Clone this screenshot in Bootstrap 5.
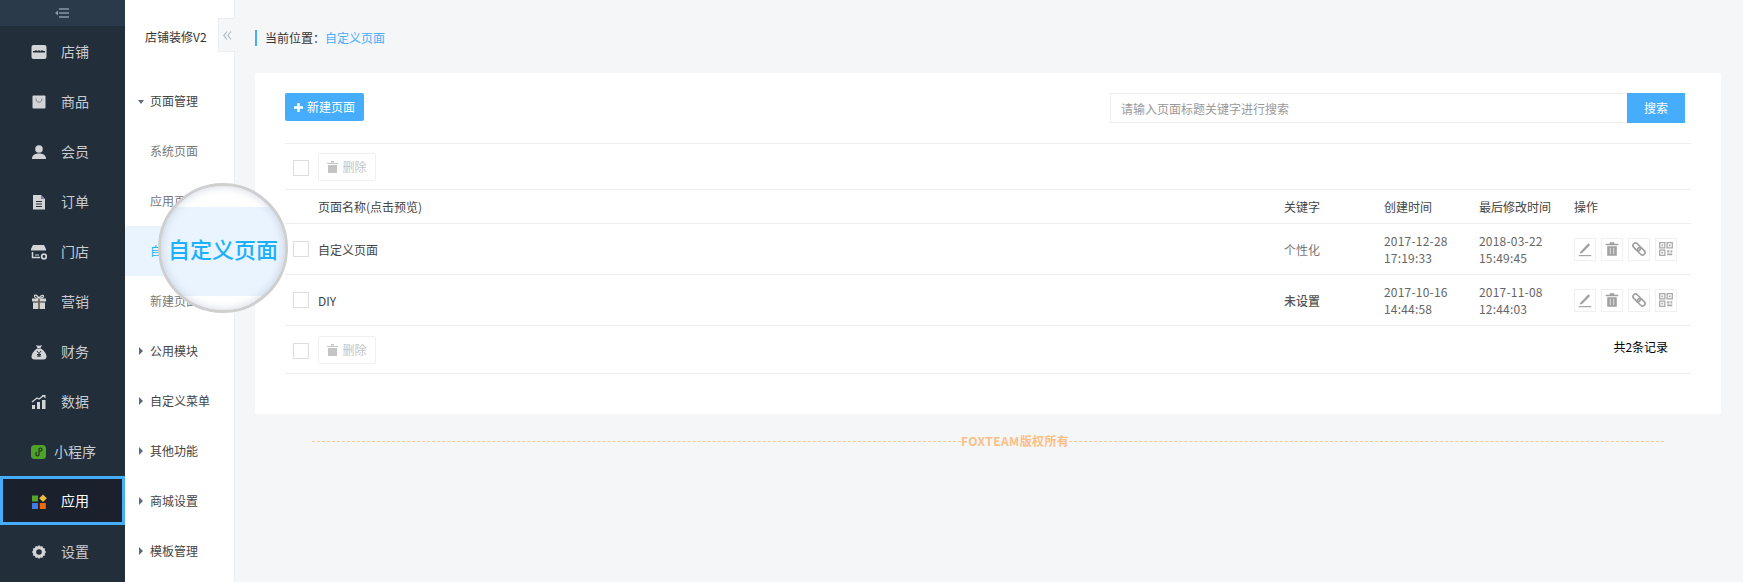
<!DOCTYPE html>
<html lang="zh-CN">
<head>
<meta charset="utf-8">
<title>自定义页面</title>
<link href="https://cdn.jsdelivr.net/npm/bootstrap@5.3.0/dist/css/bootstrap.min.css" rel="stylesheet">
<style>
html,body{height:100%;}
body{position:relative;overflow:hidden;background:#f5f6f8;font-family:"Noto Sans CJK SC","Liberation Sans",sans-serif;font-size:12px;color:#333;}
.rail{width:125px;background:#232e3b;}
.rail-top{height:26px;background:#2b3a4b;}
.rail .nav-link{height:50px;padding:0;color:#c9ccd0;font-size:14px;position:relative;}
.rail .nav-link svg{width:16px;height:16px;position:absolute;left:31px;top:18px;}
.rail .nav-link span{width:100%;padding-left:25px;text-align:center;}
.rail .nav-link.on{background:#1a212d;border:3px solid #45adfb;color:#fff;height:49px;margin-bottom:1px;}
.rail .nav-link.on svg{left:28px;top:15px;}
.sub{width:110px;background:#fff;border-right:1px solid #eceef2;position:relative;}
.sub-title{height:76px;padding:29px 0 0 20px;color:#333;line-height:16px;white-space:nowrap;}
.sub .nav-link{height:50px;padding:0 0 0 25px;color:#444;position:relative;}
.sub .nav-link.child{color:#777;}
.sub .nav-link.cur{background:#eaf4fe;color:#1cb0f6;}
.tri{position:absolute;left:13px;width:0;height:0;border-style:solid;}
.tri-d{top:24px;border-width:4px 3.5px 0 3.5px;border-color:#5d6b7f transparent transparent transparent;}
.tri-r{top:21px;left:13.5px;border-width:4px 0 4px 4px;border-color:transparent transparent transparent #5d6b7f;}
.fold{position:absolute;left:93px;top:18px;width:17px;height:34px;background:#f5f6f8;border:1px solid #eceef2;border-right:0;}
.page{padding:30px 22px 0 20px;min-width:0;}
.crumb{height:16px;border-left:2px solid #45adfb;padding-left:8px;line-height:16px;margin-bottom:27px;color:#333;}
.crumb a{color:#45adfb;text-decoration:none;}
.panel{background:#fff;height:341px;padding:20px 30px 0;}
.btn-new{height:28px;width:79px;padding:0;background:#45adfb;border:0;border-radius:2px;color:#fff;font-size:12px;}
.seek{width:575px;height:30px;margin-right:6px;}
.seek .form-control{height:30px;border:1px solid #eee;border-right:0;border-radius:0;font-size:12px;padding:0 10px;color:#666;box-shadow:none;}
.seek .form-control::placeholder{color:#999;}
.seek .btn{width:58px;height:30px;padding:0;background:#45adfb;border:0;border-radius:0;color:#fff;font-size:12px;}
.grid-wrap{margin-top:20px;}
.grid.table{table-layout:fixed;width:1406px;margin:0;border-collapse:separate;border-spacing:0;border-top:1px solid #eee;color:#444;font-size:12px;}
.grid.table>:not(caption)>*>*{padding:0;border-bottom:1px solid #eee;vertical-align:middle;box-shadow:none;background:transparent;color:inherit;font-weight:400;line-height:17px;}
.r-tool{height:46px;}
.r-head{height:34px;}
.r-body{height:51px;}
.r-foot{height:48px;}
.form-check-input.tick{width:16px;height:16px;margin:0 0 0 8px;border:1px solid #ddd;border-radius:0;display:block;float:none;}
.bar-tool{gap:9px;}
.bar-tool .form-check-input.tick{margin-top:3px;}
.btn-off{width:58px;height:28px;padding:0;border:1px solid #f0f0f0;border-radius:2px;background:#fff;color:#c4c4c4;font-size:12px;}
.grid.table>tbody>tr>td.muted{color:#777;}
.grid.table>tbody>tr>td.strong{color:#555;font-weight:500;}
.grid.table>tbody>tr>td.stamp{color:#666;letter-spacing:.2px;}
.acts{gap:5px;}
.act{width:22px;height:23px;padding:0;border:1px solid #f0f0f0;border-radius:0;background:#fff;}
.act svg{width:16px;height:16px;display:block;margin:auto;}
.count{color:#000;padding-right:23px;margin-top:-6px;}
.rule-box{margin:18px 57px 0 57px;height:18px;color:#fbbf85;font-weight:700;line-height:18px;white-space:nowrap;letter-spacing:.4px;}
.rule-l{width:649px;border-top:1px dashed #fbc99a;}
.rule-r{flex:1;border-top:1px dashed #fbc99a;}
.lens{position:absolute;left:158px;top:183px;width:130px;height:130px;border-radius:50%;border:3px solid #cfcfcf;background:linear-gradient(#fff 0,#fff 21px,#eaf4fe 21px,#eaf4fe 110px,#fff 110px);box-shadow:inset 0 0 8px rgba(120,140,170,.35);color:#1cb0ff;font-size:22px;font-weight:500;line-height:1;}
</style>
</head>
<body class="d-flex">
<aside class="rail flex-shrink-0">
  <div class="rail-top d-flex align-items-center justify-content-center">
    <svg width="15" height="10" viewBox="0 0 15 10"><path d="M0 5l3-2.500v5z" fill="#8b97a5"/><path d="M4 1h10M4 5h10M4 9h10" stroke="#8b97a5" stroke-width="1.300"/></svg>
  </div>
  <nav class="nav flex-column">
    <a class="nav-link d-flex align-items-center" href="#"><svg viewBox="0 0 16 16"><rect x="0.500" y="1" width="15" height="14" rx="2" fill="#d2d4d6"/><path d="M2 8.500V7h1.500a2 2 0 0 1 3 0 2 2 0 0 1 3 0 2 2 0 0 1 3 0H14v1.500z" fill="#232e3b"/></svg><span>店铺</span></a>
    <a class="nav-link d-flex align-items-center" href="#"><svg viewBox="0 0 16 16"><rect x="1.500" y="1.500" width="13" height="13" rx="1" fill="#d2d4d6"/><path d="M5 4.500c0 5 6 5 6 0" fill="none" stroke="#7c8590"/></svg><span>商品</span></a>
    <a class="nav-link d-flex align-items-center" href="#"><svg viewBox="0 0 16 16"><circle cx="8" cy="5" r="3.800" fill="#d2d4d6"/><path d="M1 15c0-4 3-5.500 7-5.500s7 1.500 7 5.500z" fill="#d2d4d6"/></svg><span>会员</span></a>
    <a class="nav-link d-flex align-items-center" href="#"><svg viewBox="0 0 16 16"><path d="M2 1h8l4 4v10.500H2z" fill="#d2d4d6"/><path d="M10 1l4 4h-4z" fill="#8c6fb0"/><path d="M5 7.500h6M5 10h6M5 12.500h6" stroke="#232e3b" stroke-width="1.200"/></svg><span>订单</span></a>
    <a class="nav-link d-flex align-items-center" href="#"><svg viewBox="0 0 16 16"><path d="M2 1h11l2 4H0z" fill="#d2d4d6"/><path d="M0 5h15v1.500H0z" fill="#d2d4d6"/><path d="M1.500 8v5.500H9" fill="none" stroke="#d2d4d6" stroke-width="1.500"/><path d="M4 11h4" stroke="#d2d4d6"/><circle cx="13" cy="12.500" r="2.300" fill="none" stroke="#d2d4d6" stroke-width="1.800"/></svg><span>门店</span></a>
    <a class="nav-link d-flex align-items-center" href="#"><svg viewBox="0 0 16 16"><path d="M8 4C6 1 3 0 3.500 2.500S6 4 8 4c2 0 4 .5 4.500-1.500S10 1 8 4z" fill="none" stroke="#d2d4d6" stroke-width="1.200"/><path d="M1 4.500h6.300v3H1zM8.700 4.500H15v3H8.700zM2 8.500h5.300V15H2zM8.700 8.500H14V15H8.700z" fill="#d2d4d6"/><path d="M8 4.500V15" stroke="#a9814f"/></svg><span>营销</span></a>
    <a class="nav-link d-flex align-items-center" href="#"><svg viewBox="0 0 16 16"><path d="M5 1c1.500 1 4.500 1 6 0l-1.500 3h-3z" fill="#d2d4d6"/><path d="M6 4.500h4c3 2 5.500 5 5.500 8 0 2-1 3-3 3h-9c-2 0-3-1-3-3 0-3 2.500-6 5.500-8z" fill="#d2d4d6"/><path d="M6 7l2 2.500L10 7M8 9.500V13M6 10.500h4M6 12h4" fill="none" stroke="#232e3b"/></svg><span>财务</span></a>
    <a class="nav-link d-flex align-items-center" href="#"><svg viewBox="0 0 16 16"><path d="M1 11h3v4H1zM6 8h3v7H6zM11 6h3.500v9H11z" fill="#d2d4d6"/><path d="M1 8l5-4 2 1 4-3" fill="none" stroke="#d2d4d6" stroke-width="1.300"/><path d="M10.500 1h4v3.500z" fill="#d2d4d6"/></svg><span>数据</span></a>
    <a class="nav-link d-flex align-items-center" href="#"><svg viewBox="0 0 16 16"><rect x="0" y="1" width="15" height="14" rx="3.500" fill="#4ea227"/><path d="M5 8.500v2a1.500 1.500 0 0 0 3 0v-5a1.500 1.500 0 0 1 3 0c0 1.200-1 1.700-1.800 1.700M5.800 8.300C5 8.400 5 9 5 9" fill="none" stroke="#1f2d22" stroke-width="1.200"/></svg><span>小程序</span></a>
    <a class="nav-link on d-flex align-items-center" href="#"><svg viewBox="0 0 16 16"><rect x="1" y="1.500" width="6" height="6" fill="#54a52b"/><path d="M12 0.500l3.800 3.800-3.800 3.800-3.800-3.800z" fill="#f0bd3c"/><rect x="1" y="9" width="6" height="6" fill="#4479e3"/><rect x="8.800" y="9" width="6" height="6" fill="#ee6c0e"/></svg><span>应用</span></a>
    <a class="nav-link d-flex align-items-center" href="#"><svg viewBox="0 0 16 16"><path d="M8 1l1.300 1.600 2-.5.800 1.900 2 .6-.3 2L15.200 8l-1.400 1.400.3 2-2 .6-.8 1.900-2-.5L8 15l-1.300-1.600-2 .5-.8-1.900-2-.6.3-2L.8 8l1.400-1.400-.3-2 2-.6.800-1.900 2 .5z" fill="#d2d4d6"/><circle cx="8" cy="8" r="2.800" fill="#232e3b"/></svg><span>设置</span></a>
  </nav>
</aside>

<aside class="sub flex-shrink-0">
  <div class="sub-title">店铺装修V2</div>
  <div class="fold d-flex align-items-center justify-content-center">
    <svg width="9" height="9" viewBox="0 0 9 9"><path d="M4 .5L.8 4.500 4 8.500M8 .5L4.800 4.500 8 8.500" fill="none" stroke="#aab5c4" stroke-width="1.100"/></svg>
  </div>
  <nav class="nav flex-column">
    <a class="nav-link d-flex align-items-center" href="#"><i class="tri tri-d"></i>页面管理</a>
    <a class="nav-link child d-flex align-items-center" href="#">系统页面</a>
    <a class="nav-link child d-flex align-items-center" href="#">应用页面</a>
    <a class="nav-link child cur d-flex align-items-center" href="#">自定义页面</a>
    <a class="nav-link child d-flex align-items-center" href="#">新建页面</a>
    <a class="nav-link d-flex align-items-center" href="#"><i class="tri tri-r"></i>公用模块</a>
    <a class="nav-link d-flex align-items-center" href="#"><i class="tri tri-r"></i>自定义菜单</a>
    <a class="nav-link d-flex align-items-center" href="#"><i class="tri tri-r"></i>其他功能</a>
    <a class="nav-link d-flex align-items-center" href="#"><i class="tri tri-r"></i>商城设置</a>
    <a class="nav-link d-flex align-items-center" href="#"><i class="tri tri-r"></i>模板管理</a>
  </nav>
</aside>

<main class="page flex-grow-1">
  <div class="crumb">当前位置：<a href="#">自定义页面</a></div>
  <section class="panel">
    <div class="d-flex justify-content-between align-items-start">
      <button class="btn btn-new d-inline-flex align-items-center justify-content-center gap-1" type="button"><svg width="9" height="9" viewBox="0 0 9 9"><path d="M4.500 0v9M0 4.500h9" stroke="#fff" stroke-width="2.400"/></svg>新建页面</button>
      <div class="input-group seek">
        <input class="form-control" type="text" placeholder="请输入页面标题关键字进行搜索">
        <button class="btn" type="button">搜索</button>
      </div>
    </div>
    <div class="grid-wrap">
      <table class="table grid">
        <colgroup><col style="width:33px"><col style="width:966px"><col style="width:100px"><col style="width:95px"><col style="width:95px"><col style="width:117px"></colgroup>
        <thead>
          <tr class="r-tool"><td colspan="6"><div class="d-flex align-items-center bar-tool"><input class="form-check-input tick" type="checkbox"><button class="btn btn-off d-inline-flex align-items-center justify-content-center gap-1" type="button"><svg width="11" height="12" viewBox="0 0 11 12"><path d="M0 2h11v1H0zM4 0h3v1.500H4zM1 4h9v8H1z" fill="#c4c4c4"/></svg>删除</button></div></td></tr>
          <tr class="r-head"><th></th><th>页面名称(点击预览)</th><th>关键字</th><th>创建时间</th><th>最后修改时间</th><th>操作</th></tr>
        </thead>
        <tbody>
          <tr class="r-body"><td><input class="form-check-input tick" type="checkbox"></td><td>自定义页面</td><td class="muted">个性化</td><td class="stamp">2017-12-28<br>17:19:33</td><td class="stamp">2018-03-22<br>15:49:45</td>
            <td><div class="d-flex acts">
              <button class="btn act" type="button"><svg viewBox="0 0 14 14"><path d="M3 9.500L10 2l1.500 1.500L4.500 10.500 2.500 11z" fill="#a0a0a0"/><path d="M1.500 12.800h11" stroke="#a0a0a0" stroke-width="1"/></svg></button>
              <button class="btn act" type="button"><svg viewBox="0 0 14 14"><path d="M1.500 2.500h11v1.200h-11zM5 1h4v1.500H5zM2.800 4.700h8.400V13H2.800z" fill="#a0a0a0"/><path d="M5.500 6v5.500M8.500 6v5.500" stroke="#fff" stroke-width=".6"/></svg></button>
              <button class="btn act" type="button"><svg viewBox="0 0 14 14"><g transform="rotate(45 7 7)" fill="none" stroke="#a0a0a0" stroke-width="1.500"><rect x="0.500" y="4.800" width="7.500" height="4.400" rx="2.200"/><rect x="6" y="4.800" width="7.500" height="4.400" rx="2.200"/></g></svg></button>
              <button class="btn act" type="button"><svg viewBox="0 0 14 14"><g fill="none" stroke="#a8a8a8" stroke-width="1.100"><path d="M1.500 1.500h4.500v4.500H1.500zM8 1.500h4.500v4.500H8zM1.500 8h4.500v4.500H1.500z"/></g><path d="M3 3h1.500v1.500H3zM9.500 3H11v1.500H9.500zM3 9.500h1.500V11H3zM8 8h2v2H8zM11 8h1.500v2H11zM8 11h4.500v1.500H8z" fill="#a8a8a8"/></svg></button>
            </div></td></tr>
          <tr class="r-body"><td><input class="form-check-input tick" type="checkbox"></td><td>DIY</td><td class="strong">未设置</td><td class="stamp">2017-10-16<br>14:44:58</td><td class="stamp">2017-11-08<br>12:44:03</td>
            <td><div class="d-flex acts">
              <button class="btn act" type="button"><svg viewBox="0 0 14 14"><path d="M3 9.500L10 2l1.500 1.500L4.500 10.500 2.500 11z" fill="#a0a0a0"/><path d="M1.500 12.800h11" stroke="#a0a0a0" stroke-width="1"/></svg></button>
              <button class="btn act" type="button"><svg viewBox="0 0 14 14"><path d="M1.500 2.500h11v1.200h-11zM5 1h4v1.500H5zM2.800 4.700h8.400V13H2.800z" fill="#a0a0a0"/><path d="M5.500 6v5.500M8.500 6v5.500" stroke="#fff" stroke-width=".6"/></svg></button>
              <button class="btn act" type="button"><svg viewBox="0 0 14 14"><g transform="rotate(45 7 7)" fill="none" stroke="#a0a0a0" stroke-width="1.500"><rect x="0.500" y="4.800" width="7.500" height="4.400" rx="2.200"/><rect x="6" y="4.800" width="7.500" height="4.400" rx="2.200"/></g></svg></button>
              <button class="btn act" type="button"><svg viewBox="0 0 14 14"><g fill="none" stroke="#a8a8a8" stroke-width="1.100"><path d="M1.500 1.500h4.500v4.500H1.500zM8 1.500h4.500v4.500H8zM1.500 8h4.500v4.500H1.500z"/></g><path d="M3 3h1.500v1.500H3zM9.500 3H11v1.500H9.500zM3 9.500h1.500V11H3zM8 8h2v2H8zM11 8h1.500v2H11zM8 11h4.500v1.500H8z" fill="#a8a8a8"/></svg></button>
            </div></td></tr>
          <tr class="r-foot"><td colspan="6"><div class="d-flex align-items-center justify-content-between"><div class="d-flex align-items-center bar-tool"><input class="form-check-input tick" type="checkbox"><button class="btn btn-off d-inline-flex align-items-center justify-content-center gap-1" type="button"><svg width="11" height="12" viewBox="0 0 11 12"><path d="M0 2h11v1H0zM4 0h3v1.500H4zM1 4h9v8H1z" fill="#c4c4c4"/></svg>删除</button></div><div class="count">共2条记录</div></div></td></tr>
        </tbody>
      </table>
    </div>
  </section>
  <footer class="rule-box d-flex align-items-center"><div class="rule-l"></div><div>FOXTEAM版权所有</div><div class="rule-r"></div></footer>
</main>
<div class="lens d-flex align-items-center justify-content-center">自定义页面</div>
<script src="https://cdn.jsdelivr.net/npm/bootstrap@5.3.0/dist/js/bootstrap.bundle.min.js"></script>
</body>
</html>
